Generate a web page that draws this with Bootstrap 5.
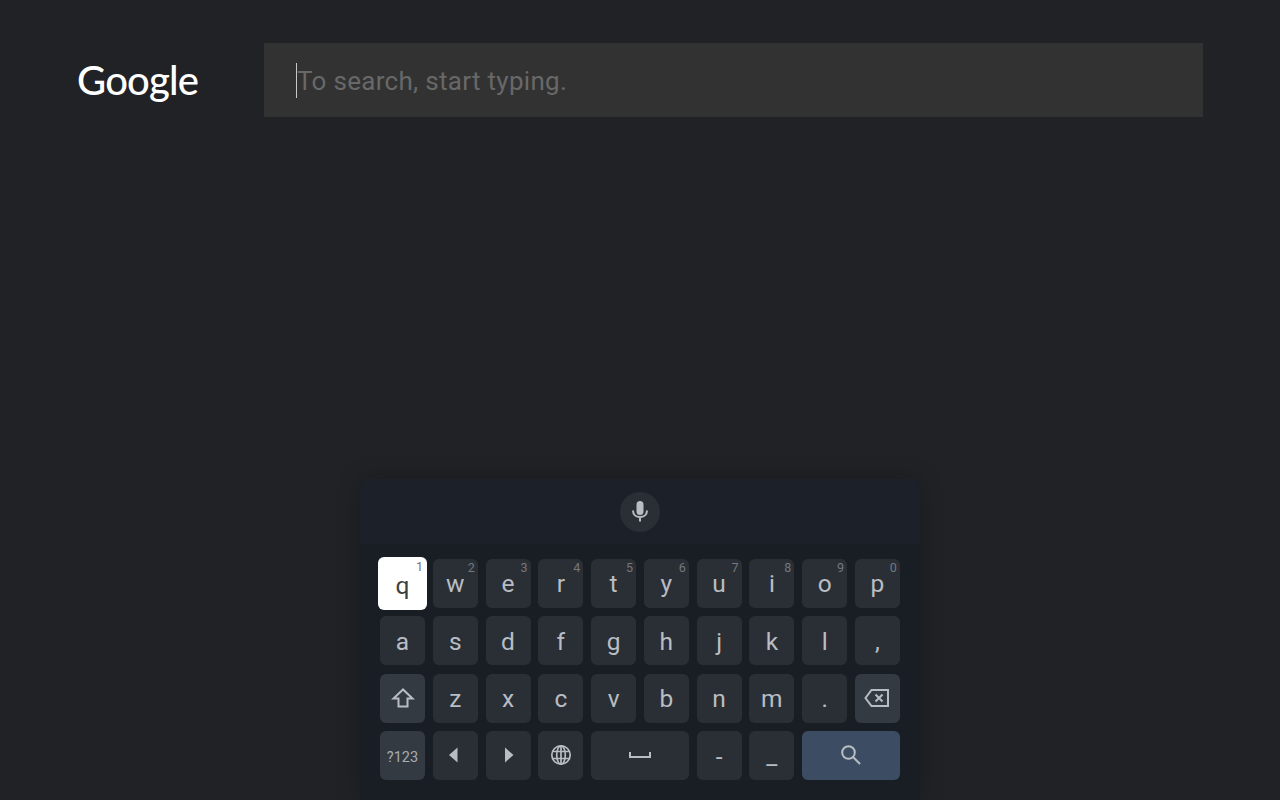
<!DOCTYPE html>
<html lang="en">
<head>
    <meta charset="UTF-8">
    <meta name="viewport" content="width=device-width, initial-scale=1.0">
    <title>Google Search</title>
    <link rel="stylesheet" href="https://cdn.jsdelivr.net/npm/bootstrap@5.3.0/dist/css/bootstrap.min.css">
    <style>
        html, body { height: 100%; }
        body { background: #212226; font-family: Roboto, "Liberation Sans", sans-serif; overflow: hidden; }
        .tv-screen { width: 1280px; height: 800px; }
        .tv-header { padding: 43px 77px 0 77px; }
        .tv-logo { width: 187px; height: 74px; color: #fff; font-family: Lato, sans-serif; font-size: 40px; font-weight: 500; letter-spacing: -0.8px; line-height: 74px; }
        .search-box { width: 939px; height: 74px; background: #323232; padding-left: 33px; }
        .search-box input { background: transparent; border: 0; outline: 0; width: 100%; padding: 0; height: 76px; font-family: Roboto, sans-serif; font-size: 26px; letter-spacing: .3px; color: #ddd; }
        .search-box input::placeholder { color: #686868; opacity: 1; }
        .search-caret { left: 32px; top: 20px; width: 1px; height: 35px; background: #c8c8c8; }
        .kb-panel { width: 560px; height: 321px; margin-top: 362px; background: #191d24; border-radius: 8px 8px 0 0; box-shadow: 0 0 24px rgba(0, 0, 0, .22); }
        .kb-strip { height: 65px; background: #1c2129; border-radius: 8px 8px 0 0; }
        .mic-btn { width: 40px; height: 40px; background: #2a2f36; }
        .kb-grid { display: grid; grid-template-columns: repeat(10, 45px); grid-auto-rows: 49px; column-gap: 7.78px; row-gap: 8.33px; padding: 15px 20px 0 20px; }
        .kb-key { background: #2a2f36; color: #b9bdc3; border-radius: 6px; font-size: 24.5px; line-height: 1; padding-top: 2px; }
        .kb-key.is-special { background: #343a42; }
        .kb-key.is-wide { grid-column: span 2; }
        .kb-key.is-action { grid-column: span 2; background: #3c4d63; }
        .kb-key.is-active { background: #fff; color: #3c4043; margin: -2px; padding-top: 5px; }
        .kb-hint { top: 3px; right: 3px; font-size: 12.5px; color: #74787e; }
        .kb-key.is-active .kb-hint { top: 4px; right: 4px; color: #70757a; }
        .kb-label { font-size: 14.5px; color: #a9adb3; padding-top: 5px; }
        .kb-key.is-flush { padding-top: 0; }
        .kb-key.is-mark { padding-top: 4px; }
    </style>
</head>
<body>
    <div class="tv-screen d-flex flex-column align-items-center">
        <div class="tv-header d-flex w-100">
            <div class="tv-logo">Google</div>
            <div class="search-box position-relative">
                <input type="text" placeholder="To search, start typing.">
                <span class="search-caret position-absolute"></span>
            </div>
        </div>
        <div class="kb-panel">
            <div class="kb-strip d-flex align-items-center justify-content-center">
                <div class="mic-btn rounded-circle d-flex align-items-center justify-content-center">
                    <svg width="24" height="24" viewBox="0 0 24 24" fill="none" stroke="#b9bdc3" stroke-width="2"><rect x="9.500" y="2" width="5" height="12" rx="2.500" fill="#b9bdc3"/><path d="M5 10.500C5 14.500 8 17 12 17S19 14.500 19 10.500M12 17V21.500"/></svg>
                </div>
            </div>
            <div class="kb-grid">
                <div class="kb-key is-active position-relative d-flex align-items-center justify-content-center">q<span class="kb-hint position-absolute">1</span></div>
                <div class="kb-key position-relative d-flex align-items-center justify-content-center">w<span class="kb-hint position-absolute">2</span></div>
                <div class="kb-key position-relative d-flex align-items-center justify-content-center">e<span class="kb-hint position-absolute">3</span></div>
                <div class="kb-key position-relative d-flex align-items-center justify-content-center">r<span class="kb-hint position-absolute">4</span></div>
                <div class="kb-key position-relative d-flex align-items-center justify-content-center">t<span class="kb-hint position-absolute">5</span></div>
                <div class="kb-key position-relative d-flex align-items-center justify-content-center">y<span class="kb-hint position-absolute">6</span></div>
                <div class="kb-key position-relative d-flex align-items-center justify-content-center">u<span class="kb-hint position-absolute">7</span></div>
                <div class="kb-key position-relative d-flex align-items-center justify-content-center">i<span class="kb-hint position-absolute">8</span></div>
                <div class="kb-key position-relative d-flex align-items-center justify-content-center">o<span class="kb-hint position-absolute">9</span></div>
                <div class="kb-key position-relative d-flex align-items-center justify-content-center">p<span class="kb-hint position-absolute">0</span></div>

                <div class="kb-key d-flex align-items-center justify-content-center">a</div>
                <div class="kb-key d-flex align-items-center justify-content-center">s</div>
                <div class="kb-key d-flex align-items-center justify-content-center">d</div>
                <div class="kb-key d-flex align-items-center justify-content-center">f</div>
                <div class="kb-key d-flex align-items-center justify-content-center">g</div>
                <div class="kb-key d-flex align-items-center justify-content-center">h</div>
                <div class="kb-key d-flex align-items-center justify-content-center">j</div>
                <div class="kb-key d-flex align-items-center justify-content-center">k</div>
                <div class="kb-key d-flex align-items-center justify-content-center">l</div>
                <div class="kb-key d-flex align-items-center justify-content-center">,</div>

                <div class="kb-key is-special is-flush d-flex align-items-center justify-content-center">
                    <svg width="24" height="24" viewBox="0 0 24 24" fill="none" stroke="#b9bdc3" stroke-width="2"><path d="M12 3.500 2.500 12.500H7.500V20.500H16.500V12.500H21.500Z"/></svg>
                </div>
                <div class="kb-key d-flex align-items-center justify-content-center">z</div>
                <div class="kb-key d-flex align-items-center justify-content-center">x</div>
                <div class="kb-key d-flex align-items-center justify-content-center">c</div>
                <div class="kb-key d-flex align-items-center justify-content-center">v</div>
                <div class="kb-key d-flex align-items-center justify-content-center">b</div>
                <div class="kb-key d-flex align-items-center justify-content-center">n</div>
                <div class="kb-key d-flex align-items-center justify-content-center">m</div>
                <div class="kb-key d-flex align-items-center justify-content-center">.</div>
                <div class="kb-key is-special is-flush d-flex align-items-center justify-content-center">
                    <svg width="26" height="20" viewBox="0 0 26 20" fill="none" stroke="#b9bdc3" stroke-width="2"><path d="M7.500 2H24V18H7.500L1.500 10Z"/><path d="M11.500 6.500 18.500 13.500M18.500 6.500 11.500 13.500"/></svg>
                </div>

                <div class="kb-key is-special is-flush d-flex align-items-center justify-content-center"><span class="kb-label">?123</span></div>
                <div class="kb-key is-flush d-flex align-items-center justify-content-center">
                    <svg width="24" height="24" viewBox="0 0 24 24" fill="#b9bdc3"><path d="M14.500 4.500V19.500L6 12Z"/></svg>
                </div>
                <div class="kb-key is-flush d-flex align-items-center justify-content-center">
                    <svg width="24" height="24" viewBox="0 0 24 24" fill="#b9bdc3"><path d="M9 4.500V19.500L17.500 12Z"/></svg>
                </div>
                <div class="kb-key is-flush d-flex align-items-center justify-content-center">
                    <svg width="22" height="22" viewBox="0 0 22 22" fill="none" stroke="#b9bdc3" stroke-width="1.700"><circle cx="11" cy="11" r="9.200"/><ellipse cx="11" cy="11" rx="4.300" ry="9.200"/><path d="M11 1.800V20.200M2.600 7.500H19.400M2.600 14.500H19.400"/></svg>
                </div>
                <div class="kb-key is-wide is-flush d-flex align-items-center justify-content-center">
                    <svg width="22" height="8" viewBox="0 0 22 8" fill="none" stroke="#b9bdc3" stroke-width="2"><path d="M1 1V6H21V1"/></svg>
                </div>
                <div class="kb-key is-mark d-flex align-items-center justify-content-center">-</div>
                <div class="kb-key d-flex align-items-center justify-content-center">_</div>
                <div class="kb-key is-action is-flush d-flex align-items-center justify-content-center">
                    <svg width="24" height="24" viewBox="0 0 24 24" fill="none" stroke="#b9bdc3" stroke-width="2"><circle cx="9.500" cy="9.500" r="6.300"/><path d="M14 14 21 21"/></svg>
                </div>
            </div>
        </div>
    </div>
    <script src="https://cdn.jsdelivr.net/npm/bootstrap@5.3.0/dist/js/bootstrap.bundle.min.js"></script>
</body>
</html>
